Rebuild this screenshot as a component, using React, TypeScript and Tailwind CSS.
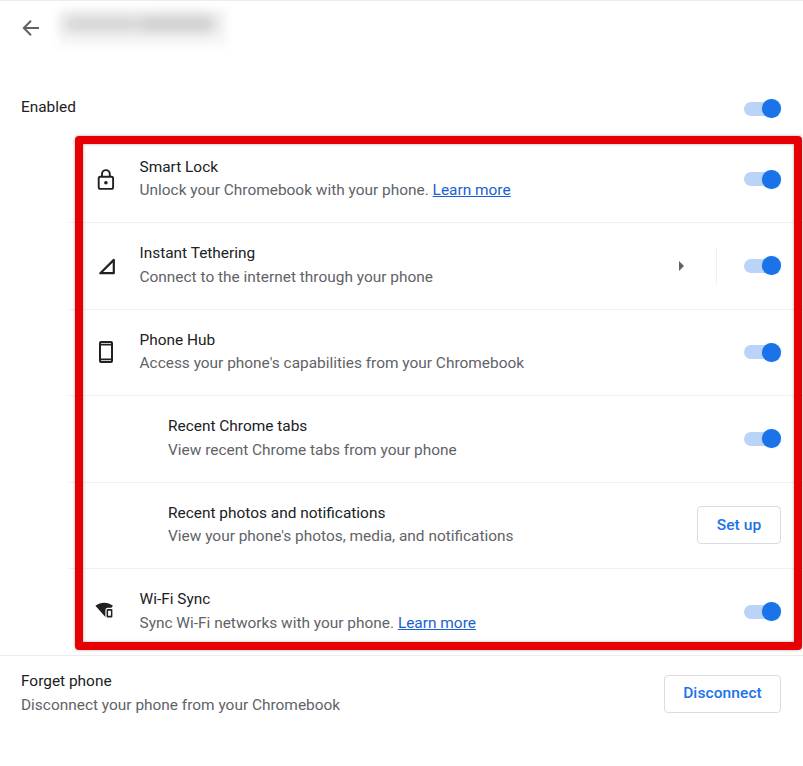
import type { ReactNode } from "react";

function Toggle() {
  return (
    <div className="flex h-[20px] w-[38px] shrink-0 items-center justify-end rounded-full">
      <div className="-mr-[14px] h-[14px] w-[32px] rounded-full bg-[#bad3f9]" />
      <div className="relative h-[19px] w-[19px] rounded-full bg-[#1a73e8] shadow-[0_0_1px_rgba(26,115,232,0.6)]" />
    </div>
  );
}

function OutlineButton({ children, className }: { children: ReactNode; className: string }) {
  return (
    <button
      className={`h-[38px] shrink-0 rounded-[4px] border border-[#dadce0] text-[15.5px] font-medium tracking-[0.1px] text-[#1a73e8] ${className}`}
    >
      {children}
    </button>
  );
}

function Labels({ title, sub, link }: { title: string; sub: string; link?: boolean }) {
  return (
    <div className="flex flex-1 flex-col whitespace-nowrap text-[15.43px] leading-[23.5px]">
      <div className="text-[#202124]">{title}</div>
      <div className="text-[#5f6368]">
        {sub}
        {link && (
          <>
            {" "}
            <a className="text-[#1a5fd0] underline underline-offset-1">Learn more</a>
          </>
        )}
      </div>
    </div>
  );
}

function LockIcon() {
  return (
    <svg className="mt-[2px]" width="24" height="24" viewBox="0 0 24 24" fill="none" stroke="#202124" strokeWidth="1.9">
      <rect x="4.7" y="8.7" width="14.4" height="12.2" rx="1.6" />
      <path d="M8 8.7V6a3.9 3.9 0 0 1 7.8 0v2.7" />
      <circle cx="11.9" cy="14.8" r="1.8" fill="#202124" stroke="none" />
    </svg>
  );
}

function SignalIcon() {
  return (
    <svg width="24" height="24" viewBox="0 0 24 24" fill="none" stroke="#202124" strokeWidth="2.2">
      <path d="M6.3 19.2H19.8V5.9Z" strokeLinejoin="round" />
    </svg>
  );
}

function PhoneIcon() {
  return (
    <svg width="24" height="24" viewBox="0 0 24 24">
      <path
        fill="#202124"
        fillRule="evenodd"
        d="M7 1H17a2 2 0 0 1 2 2V21a2 2 0 0 1-2 2H7a2 2 0 0 1-2-2V3a2 2 0 0 1 2-2ZM7 5.5V18.5H17V5.5ZM7 2.9V3.8H17V2.9ZM7 20.2V21.1H17V20.2Z"
      />
    </svg>
  );
}

function WifiSyncIcon() {
  return (
    <svg className="-mt-[3px]" width="24" height="24" viewBox="0 0 24 24">
      <path fill="#202124" d="M1.4 7.8C6.8 3.7 13.6 3.7 19 7.8L17.4 9.8H13.4Q11.4 10 11.4 12V19Z" />
      <path
        fill="#202124"
        fillRule="evenodd"
        d="M13.6 10.9h3.8a1 1 0 0 1 1 1v6.7a1 1 0 0 1-1 1h-3.8a1 1 0 0 1-1-1v-6.7a1 1 0 0 1 1-1ZM14.1 12.8v4.9h2.8v-4.9Z"
      />
    </svg>
  );
}

type Feature = {
  title: string;
  sub: string;
  height: string;
  icon?: ReactNode;
  link?: boolean;
  arrow?: boolean;
  setup?: boolean;
};

const features: Feature[] = [
  { title: "Smart Lock", sub: "Unlock your Chromebook with your phone.", height: "h-[87px]", icon: <LockIcon />, link: true },
  { title: "Instant Tethering", sub: "Connect to the internet through your phone", height: "h-[87px] pb-px", icon: <SignalIcon />, arrow: true },
  { title: "Phone Hub", sub: "Access your phone's capabilities from your Chromebook", height: "h-[86px] pb-px", icon: <PhoneIcon /> },
  { title: "Recent Chrome tabs", sub: "View recent Chrome tabs from your phone", height: "h-[87px] pb-px" },
  { title: "Recent photos and notifications", sub: "View your phone's photos, media, and notifications", height: "h-[86px] pb-px", setup: true },
  { title: "Wi-Fi Sync", sub: "Sync Wi-Fi networks with your phone.", height: "h-[87px] pb-px", icon: <WifiSyncIcon />, link: true },
];

function FeatureRow({ f, last }: { f: Feature; last: boolean }) {
  return (
    <div
      className={`ml-[68px] flex items-center border-b pr-[22px] ${f.height} ${last ? "border-transparent" : "border-[#f0f0f1]"} ${f.icon ? "pl-[26px]" : "pl-[100px]"}`}
    >
      {f.icon && <div className="mr-[21.5px] w-6 shrink-0">{f.icon}</div>}
      <Labels title={f.title} sub={f.sub} link={f.link} />
      {f.arrow && (
        <div className="mr-[26px] flex h-[37px] w-[39px] items-center border-r border-[#f0f0f1]">
          <div className="ml-px h-0 w-0 border-y-[5px] border-l-[5px] border-y-transparent border-l-[#5f6368]" />
        </div>
      )}
      {f.setup ? <OutlineButton className="w-[84px] pt-[2px]">Set up</OutlineButton> : <Toggle />}
    </div>
  );
}

export default function App() {
  return (
    <main className="relative h-[766px] w-[803px] overflow-hidden bg-white font-[Roboto,sans-serif]">
      <header className="flex h-[56px] items-center border-t border-[#ececec] pb-[2px] pl-[19px]">
        <svg width="24" height="24" viewBox="0 0 24 24" fill="none" stroke="#5f6368" strokeWidth="2">
          <path d="M20 12H5.2M12 4.8L4.8 12l7.2 7.2" />
        </svg>
        <div className="mt-px ml-[18px] flex h-[32px] w-[164px] items-start bg-[#f9f9f9] pl-[3px] pt-[4px] shadow-[0_0_8px_4px_#fafafa]">
          <div className="flex h-[16px] w-[152px] gap-[2px] blur-[7px]">
            <div className="h-[16px] w-[72px] bg-[#d0d0d0]" />
            <div className="h-[16px] flex-1 bg-[#c9c9c9]" />
          </div>
        </div>
      </header>
      <section className="flex h-[80px] items-center justify-between pl-[21px] pr-[22px] pt-[25px]">
        <div className="pb-[2px] text-[15.4px] leading-[23.5px] text-[#202124]">Enabled</div>
        <Toggle />
      </section>
      <section>
        {features.map((f, i) => (
          <FeatureRow key={f.title} f={f} last={i === features.length - 1} />
        ))}
      </section>
      <section className="-mt-px flex h-[78px] items-center border-t border-[#ececed] pb-[2px] pl-[21px] pr-[22px]">
        <Labels title="Forget phone" sub="Disconnect your phone from your Chromebook" />
        <OutlineButton className="w-[117px]">Disconnect</OutlineButton>
      </section>
      <div className="pointer-events-none absolute left-[75px] top-[135.5px] h-[514px] w-[727px] rounded-[4px] border-8 border-[#e60004] shadow-[0_0_3px_rgba(0,0,0,0.35),inset_0_0_3px_rgba(0,0,0,0.35)]" />
    </main>
  );
}
